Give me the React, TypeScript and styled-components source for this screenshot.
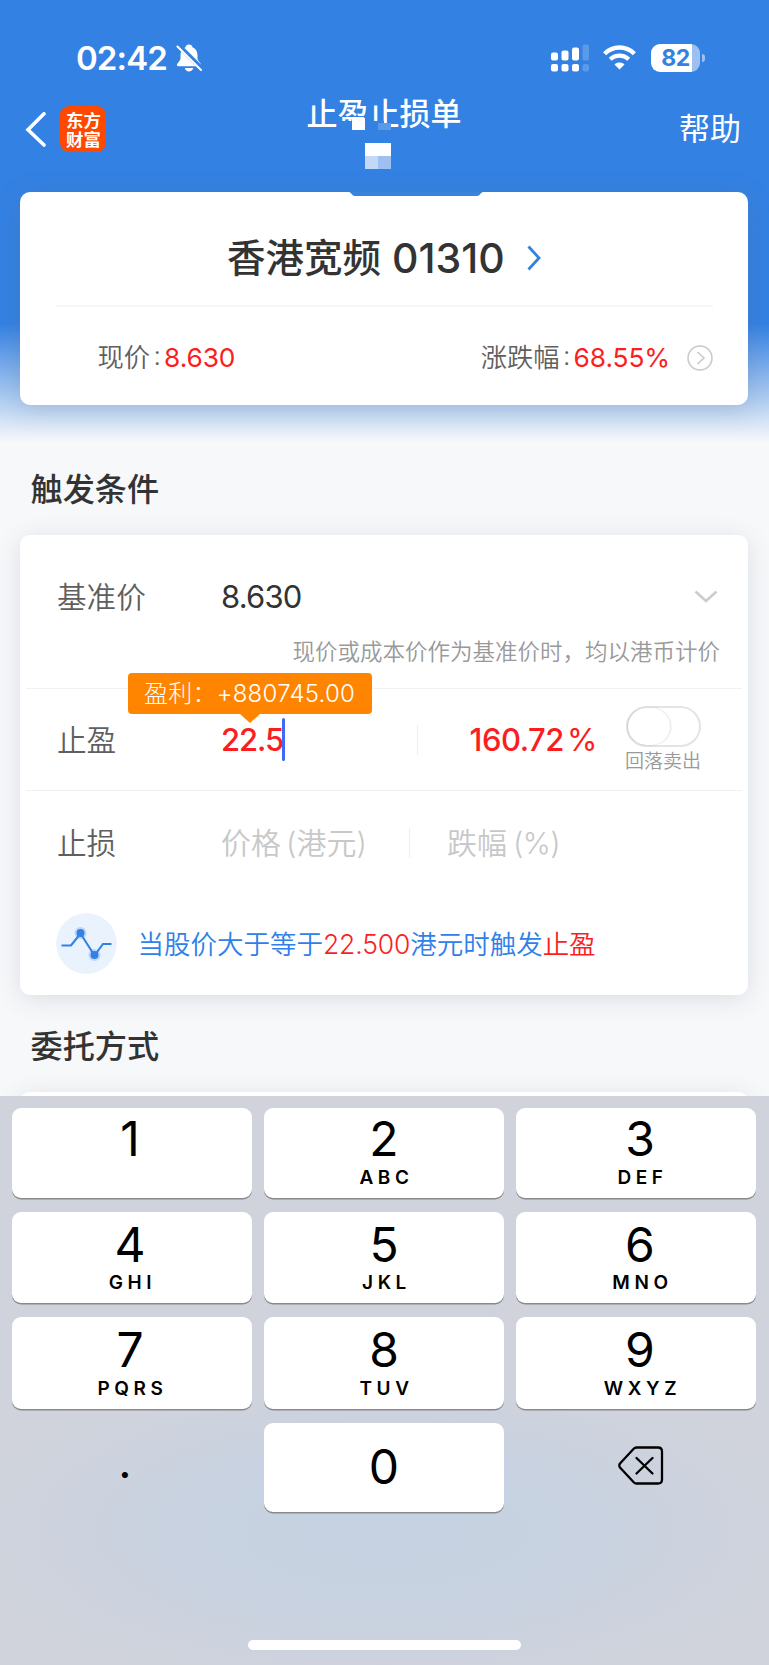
import React from "react";
import styled, { createGlobalStyle } from "styled-components";

const Global = createGlobalStyle`
  * { box-sizing: border-box; }
  html, body { margin: 0; padding: 0; }
  body {
    width: 769px;
    font-family: Inter, "Noto Sans CJK SC", sans-serif;
    color: #333;
    background: #f6f8fa;
  }
`;

const Phone = styled.div`
  width: 769px;
  height: 1665px;
  overflow: hidden;
  display: flex;
  flex-direction: column;
`;

const Content = styled.main`
  height: 1096px;
  flex: none;
  overflow: hidden;
  display: flex;
  flex-direction: column;
  background: linear-gradient(180deg, #3381e3 0, #3381e3 324px, #f6f8fa 442px, #f6f8fa 100%);
`;

const StatusBar = styled.header`
  height: 92px;
  flex: none;
  display: flex;
  align-items: center;
  padding: 23px 64px 0 76px;
  color: #fff;
`;

const Clock = styled.span`
  width: 100px;
  font-size: 33px;
  line-height: 40px;
  font-weight: 600;
  letter-spacing: -0.9px;
  white-space: nowrap;
`;

const StatusIcons = styled.div`
  margin-left: auto;
  display: flex;
  align-items: center;
  gap: 14px;
`;

const Battery = styled.div`
  margin-left: 1px;
  display: flex;
  align-items: center;
  gap: 2px;
  &::after {
    content: "";
    width: 3px;
    height: 8px;
    border-radius: 0 3px 3px 0;
    background: #9dc0f1;
  }
`;

const BatteryBody = styled.div`
  width: 49px;
  height: 28px;
  border-radius: 9px;
  background: linear-gradient(90deg, #fff 0 41px, #9dc0f1 41px);
  color: #3381e3;
  font-size: 23px;
  line-height: 28px;
  font-weight: 700;
  letter-spacing: -0.5px;
  text-align: center;
`;

const NavBar = styled.nav`
  height: 100px;
  flex: none;
  display: grid;
  grid-template-columns: 1fr 156px 1fr;
  align-items: start;
  padding: 0 26px 0 25px;
  color: #fff;
`;

const NavLeft = styled.div`
  display: flex;
  align-items: center;
  gap: 14px;
  padding-top: 14px;
`;

const BrandMark = styled.div`
  width: 46px;
  height: 46px;
  border-radius: 9px;
  background: #ff4800;
  padding: 4px 5px 0 6px;
  font-family: "Noto Sans CJK SC", sans-serif;
  font-size: 17.4px;
  line-height: 19px;
  font-weight: 700;
`;

const NavTitle = styled.h1`
  margin: 0;
  padding-top: 1px;
  position: relative;
  font-size: 31px;
  line-height: 42px;
  font-weight: 500;
  text-align: center;
  white-space: nowrap;
`;

const Mosaic = styled.i<{ $x: number; $y: number; $w?: number; $h?: number; $c: string }>`
  position: absolute;
  left: ${(p) => p.$x}px;
  top: ${(p) => p.$y}px;
  width: ${(p) => p.$w ?? 13}px;
  height: ${(p) => p.$h ?? 13}px;
  background: ${(p) => p.$c};
`;

const Help = styled.span`
  justify-self: end;
  padding: 17px 2px 0 0;
  font-size: 31px;
  line-height: 40px;
`;

const Card = styled.section<{ $h: number; $tint?: boolean }>`
  position: relative;
  flex: none;
  height: ${(p) => p.$h}px;
  margin: 0 21px 0 20px;
  border-radius: 10px;
  background: #fff;
  box-shadow: 0 4px 24px ${(p) => (p.$tint ? "rgba(90, 110, 140, 0.25)" : "rgba(90, 95, 105, 0.16)")};
`;

const Notch = styled.svg`
  position: absolute;
  left: 328px;
  top: 0;
`;

const StockName = styled.div`
  height: 115px;
  margin: 0 35px 0 36px;
  border-bottom: 2px solid #f7f7f7;
  display: flex;
  align-items: center;
  padding: 18px 0 0 171px;
  font-size: 38.5px;
  line-height: 50px;
  font-weight: 500;
`;

const StockCode = styled.span`
  width: 112px;
  margin: 0 23px 0 11px;
  font-size: 41px;
  letter-spacing: 0;
`;

const Quotes = styled.div`
  height: 98px;
  padding: 4px 35px 0 77.5px;
  display: flex;
  align-items: center;
  font-size: 26.3px;
  line-height: 40px;
  font-weight: 350;
  color: #5f5f5f;
`;

const Colon = styled.span`
  width: 14px;
  text-align: center;
  position: relative;
  top: -2px;
`;

const QuoteValue = styled.span`
  color: #fa1e1e;
  font-weight: 400;
  letter-spacing: -0.1px;
`;

const Gap = styled.span`
  flex: 1;
`;

const CircleIcon = styled.svg`
  margin-left: 17px;
`;

const Heading = styled.h2<{ $h: number; $top: number }>`
  margin: 0;
  flex: none;
  height: ${(p) => p.$h}px;
  padding: ${(p) => p.$top}px 0 0 30.5px;
  font-size: 32.2px;
  line-height: 44px;
  font-weight: 500;
`;

const Row = styled.div<{ $h: number; $line?: boolean; $top?: number }>`
  height: ${(p) => p.$h}px;
  margin: 0 6px;
  padding: ${(p) => p.$top ?? 0}px 19px 0 31px;
  border-bottom: ${(p) => (p.$line ? "1px solid #f1f1f1" : "0")};
  display: flex;
  align-items: center;
  position: relative;
`;

const TopLine = styled.i`
  position: absolute;
  left: 0;
  right: 0;
  top: -1px;
  height: 1px;
  background: #f1f1f1;
`;

const Label = styled.span`
  width: 164px;
  font-size: 29.6px;
  line-height: 40px;
  font-weight: 350;
  color: #5f5f5f;
`;

const Value = styled.span<{ $hot?: boolean; $w?: number; $end?: boolean }>`
  width: ${(p) => (p.$w ? `${p.$w}px` : "auto")};
  text-align: ${(p) => (p.$end ? "right" : "left")};
  font-size: 31px;
  line-height: 40px;
  font-weight: ${(p) => (p.$hot ? 500 : 400)};
  color: ${(p) => (p.$hot ? "#fa1e1e" : "#333")};
  letter-spacing: ${(p) => (p.$end ? -0.45 : p.$hot ? -1.1 : -0.8)}px;
  white-space: nowrap;
`;

const Percent = styled.span`
  width: 60px;
  padding-left: 3px;
  font-size: 31px;
  line-height: 40px;
  color: #fa1e1e;
`;

const Caret = styled.i`
  position: absolute;
  left: 256px;
  top: 29px;
  width: 3px;
  height: 43px;
  border-radius: 2px;
  background: #3f69f7;
`;

const ExpandIcon = styled.svg`
  margin-right: 5px;
`;

const Hint = styled.p`
  margin: 0;
  height: 54px;
  padding: 1px 28px 0 0;
  text-align: right;
  font-size: 22.5px;
  line-height: 32px;
  font-weight: 350;
  color: #999;
  white-space: nowrap;
`;

const Bubble = styled.div`
  position: absolute;
  z-index: 1;
  left: 102px;
  top: -16px;
  width: 244px;
  height: 41px;
  padding-left: 16px;
  border-radius: 4px;
  background: #ff8400;
  color: #fff;
  font-size: 24px;
  line-height: 41px;
  font-weight: 300;
  letter-spacing: 0.25px;
  white-space: nowrap;
  &::after {
    content: "";
    position: absolute;
    left: 112px;
    top: 41px;
    border: 10px solid transparent;
    border-top: 9px solid #ff8400;
    border-bottom: 0;
  }
`;

const Separator = styled.span`
  width: 1px;
  height: 30px;
  background: #eee;
`;

const ToggleGroup = styled.div`
  width: 78px;
  display: flex;
  flex-direction: column;
  align-items: center;
  font-size: 19px;
  line-height: 24px;
  font-weight: 350;
  color: #999;
  white-space: nowrap;
`;

const Toggle = styled.div`
  width: 75px;
  height: 41px;
  margin-bottom: 3px;
  border: 2px solid #e4e4e4;
  border-radius: 21px;
  &::before {
    content: "";
    display: block;
    width: 42px;
    height: 37px;
    border-radius: 19px;
    box-shadow: 1px 0 2px rgba(0, 0, 0, 0.12), -1px 0 1px rgba(0, 0, 0, 0.1);
  }
`;

const Placeholder = styled.span<{ $w: number; $indent?: number; $gap?: number; $track?: number }>`
  width: ${(p) => p.$w}px;
  margin-left: ${(p) => p.$indent ?? 0}px;
  display: flex;
  gap: ${(p) => p.$gap ?? 5}px;
  font-size: 30px;
  line-height: 40px;
  font-weight: 350;
  color: #c8c8c8;
  white-space: nowrap;
  span + span { letter-spacing: ${(p) => p.$track ?? 0}px; }
`;

const Summary = styled.p`
  margin: 0;
  padding: 19px 0 0 35.5px;
  display: flex;
  align-items: center;
  color: #2f80e8;
  font-size: 26.5px;
  line-height: 40px;
  font-weight: 350;
  white-space: nowrap;
  svg { margin-right: 21px; }
`;

const Red = styled.em`
  font-style: normal;
  letter-spacing: -0.15px;
  color: #fa1e1e;
`;

const Keyboard = styled.section`
  flex: none;
  height: 569px;
  padding: 12px 12px 0;
  display: flex;
  flex-direction: column;
  align-items: center;
  background:
    radial-gradient(ellipse 420px 165px at 50% 435px, #c6d2e1 0%, #c8d2e1 45%, rgba(200, 210, 225, 0) 100%),
    #d0d3db;
`;

const Keys = styled.div`
  width: 745px;
  display: grid;
  grid-template-columns: repeat(3, 240px);
  grid-template-rows: 89.5px 91.5px 91.5px 89px;
  column-gap: 12px;
  row-gap: 14px;
`;

const Key = styled.button<{ $plain?: boolean; $center?: boolean; $top?: number; $shift?: number }>`
  border: 0;
  padding: ${(p) => p.$top ?? 0}px 0 0 ${(p) => Math.max(0, (p.$shift ?? 0) * 2)}px;
  padding-right: ${(p) => Math.max(0, (p.$shift ?? 0) * -2)}px;
  display: flex;
  flex-direction: column;
  align-items: center;
  justify-content: ${(p) => (p.$center ? "center" : "flex-start")};
  border-radius: 9px;
  background: ${(p) => (p.$plain ? "transparent" : "#fff")};
  box-shadow: ${(p) => (p.$plain ? "none" : "0 1.5px 0 #898a8e")};
  font-family: Inter, sans-serif;
  color: #000;
`;

const Digit = styled.span`
  font-size: 48px;
  line-height: 58px;
`;

const Letters = styled.small`
  font-size: 19px;
  line-height: 20px;
  font-weight: 600;
  letter-spacing: 4.6px;
  margin: -0.5px -5px 0 0;
`;

const DecimalPoint = styled.span`
  font-size: 46px;
  line-height: 48px;
  padding-bottom: 12px;
`;

const HomeBar = styled.div`
  width: 273px;
  height: 10px;
  margin-top: 128px;
  border-radius: 5px;
  background: #fff;
`;

const KEYS: [string, string][] = [
  ["1", ""], ["2", "ABC"], ["3", "DEF"],
  ["4", "GHI"], ["5", "JKL"], ["6", "MNO"],
  ["7", "PQRS"], ["8", "TUV"], ["9", "WXYZ"],
];

const COLUMN_SHIFT = [-2, 0, 4];

const BellOff = () => (
  <svg width="26" height="28" viewBox="0 0 26 28">
    <path
      fill="#fff"
      d="M13 .5c1.900 0 3.200 1.100 3.500 2.700 3.200 1.200 5 4 5 7.800v3.500c0 2.200 2.800 4.200 3.500 5.800.4 1-.2 1.900-1.300 1.900H2.300c-1.100 0-1.700-.9-1.300-1.900.7-1.600 3.500-3.600 3.500-5.800V11c0-3.800 1.800-6.600 5-7.800C9.800 1.600 11.100.5 13 .5zM8.800 24h8.400c-.5 2.100-2.100 3.400-4.200 3.400S9.300 26.100 8.800 24z"
    />
    <path d="M1.500 0.500L26 25" stroke="#3381e3" strokeWidth="5" />
    <path d="M1.500 2.500L25 26" stroke="#fff" strokeWidth="2" strokeLinecap="round" />
  </svg>
);

const Signal = () => (
  <svg width="38" height="28" viewBox="0 0 38 28" fill="#fff">
    <rect x="0" y="8.500" width="7" height="8" rx="2" />
    <rect x="10.500" y="6.500" width="7" height="10" rx="2" />
    <rect x="21" y="3.500" width="7" height="13" rx="2" />
    <rect x="31.500" y="0.500" width="6.500" height="16" rx="2" opacity=".2" />
    <rect x="0" y="20" width="7" height="7.500" rx="2" />
    <rect x="10.500" y="20" width="7" height="7.500" rx="2" />
    <rect x="21" y="20" width="7" height="7.500" rx="2" />
    <rect x="31.500" y="20" width="6.500" height="7.500" rx="2" opacity=".2" />
  </svg>
);

const Wifi = () => (
  <svg width="33" height="25" viewBox="0 0 33 25" fill="none" stroke="#fff">
    <path d="M1.600 8.700C10 .5 23 .5 31.400 8.700" strokeWidth="4.400" />
    <path d="M7.200 14.300c5.300-5 13.300-5 18.600 0" strokeWidth="4.200" />
    <path d="M16.500 24.500l-5-5.100c2.800-2.500 7.200-2.500 10 0z" fill="#fff" stroke="none" />
  </svg>
);

const TrendIcon = () => (
  <svg width="61" height="61" viewBox="0 0 61 61">
    <circle cx="30.500" cy="30.500" r="30.300" fill="#e9f2fd" />
    <circle cx="24.500" cy="20" r="6" fill="#bdd7f8" />
    <circle cx="38.500" cy="42" r="6" fill="#bdd7f8" />
    <path d="M5.500 32.500h9.500L24.500 20.500l14 22L47 31h8.500" fill="none" stroke="#3381e3" strokeWidth="2.100" />
    <circle cx="24.500" cy="20" r="4" fill="#3381e3" />
    <circle cx="38.500" cy="42" r="4" fill="#3381e3" />
  </svg>
);

export default function App() {
  return (
    <Phone>
      <Global />
      <Content>
        <StatusBar>
          <Clock>02:42</Clock>
          <BellOff />
          <StatusIcons>
            <Signal />
            <Wifi />
            <Battery>
              <BatteryBody>82</BatteryBody>
            </Battery>
          </StatusIcons>
        </StatusBar>
        <NavBar>
          <NavLeft>
            <svg width="21" height="35" viewBox="0 0 21 35" fill="none" stroke="#fff" strokeWidth="3.600">
              <path d="M19 1.800L3 17.800L19 33" strokeLinecap="round" />
            </svg>
            <BrandMark>东方财富</BrandMark>
          </NavLeft>
          <NavTitle>
            止盈止损单
            <Mosaic $x={31} $y={29} $w={47} $h={10} $c="#3381e3" />
            <Mosaic $x={46} $y={26} $h={12} $c="#fff" />
            <Mosaic $x={72} $y={31} $h={7} $c="#5a99e9" />
            <Mosaic $x={59} $y={51} $w={26} $c="#fdfeff" />
            <Mosaic $x={59} $y={64} $c="#c1d8f6" />
            <Mosaic $x={72} $y={64} $c="#9dc0f0" />
          </NavTitle>
          <Help>帮助</Help>
        </NavBar>
        <Card $h={213} $tint>
          <Notch width="136" height="4" viewBox="0 0 136 4">
            <path d="M1 0H135C133 0 132 4 129 4H7C4 4 3 0 1 0z" fill="#3b82dd" />
          </Notch>
          <StockName>
            香港宽频
            <StockCode>01310</StockCode>
            <svg width="14" height="26" viewBox="0 0 14 26" fill="none" stroke="#3381e3" strokeWidth="2.800">
              <path d="M1.500 1.500L12 13L1.500 24.500" />
            </svg>
          </StockName>
          <Quotes>
            现价<Colon>:</Colon>
            <QuoteValue>8.630</QuoteValue>
            <Gap />
            涨跌幅<Colon>:</Colon>
            <QuoteValue>68.55%</QuoteValue>
            <CircleIcon width="26" height="26" viewBox="0 0 26 26" fill="none" stroke="#c8c8c8" strokeWidth="1.500">
              <circle cx="13" cy="13" r="12" />
              <path d="M10.500 7l6.500 6-6.500 6" />
            </CircleIcon>
          </Quotes>
        </Card>
        <Heading $h={130} $top={63}>触发条件</Heading>
        <Card $h={460}>
          <Row $h={100} $top={23}>
            <Label>基准价</Label>
            <Value>8.630</Value>
            <Gap />
            <ExpandIcon width="24" height="14" viewBox="0 0 24 14" fill="none" stroke="#ccc" strokeWidth="2.600">
              <path d="M1.500 1.500L12 11L22.500 1.500" />
            </ExpandIcon>
          </Row>
          <Hint>现价或成本价作为基准价时，均以港币计价</Hint>
          <Row $h={102} $line $top={1}>
            <TopLine />
            <Bubble>盈利：+880745.00</Bubble>
            <Label>止盈</Label>
            <Value $hot $w={196}>22.5</Value>
            <Caret />
            <Separator />
            <Value $hot $end $w={146}>160.72</Value>
            <Percent>%</Percent>
            <ToggleGroup>
              <Toggle />
              回落卖出
            </ToggleGroup>
          </Row>
          <Row $h={103} $top={1}>
            <Label>止损</Label>
            <Placeholder $w={188}>
              <span>价格</span>
              <span>(港元)</span>
            </Placeholder>
            <Separator />
            <Placeholder $w={130} $indent={37} $gap={6} $track={-0.7}>
              <span>跌幅</span>
              <span>(%)</span>
            </Placeholder>
          </Row>
          <Summary>
            <TrendIcon />
            当股价大于等于<Red>22.500</Red>港元时触发<Red>止盈</Red>
          </Summary>
        </Card>
        <Heading $h={97} $top={30}>委托方式</Heading>
        <Card $h={200} />
      </Content>
      <Keyboard>
        <Keys>
          {KEYS.map(([digit, letters], i) => (
            <Key key={digit} $top={i < 3 ? 2 : 4} $shift={COLUMN_SHIFT[i % 3]}>
              <Digit>{digit}</Digit>
              <Letters>{letters}</Letters>
            </Key>
          ))}
          <Key $plain $center $shift={-7}>
            <DecimalPoint>.</DecimalPoint>
          </Key>
          <Key $center>
            <Digit>0</Digit>
          </Key>
          <Key $plain $center $shift={5}>
            <svg width="46" height="43" viewBox="0 0 46 43" fill="none" stroke="#000" strokeWidth="2.300" strokeLinecap="round" strokeLinejoin="round">
              <path d="M18.500 1.500H40q4 0 4 4v28q0 4-4 4H18.500q-1.600 0-2.800-1.200L2 21.500q-1.400-2 0-4L15.700 2.700Q16.900 1.500 18.500 1.500z" />
              <path d="M18.500 12l16 15.500M34.500 12l-16 15.500" />
            </svg>
          </Key>
        </Keys>
        <HomeBar />
      </Keyboard>
    </Phone>
  );
}
